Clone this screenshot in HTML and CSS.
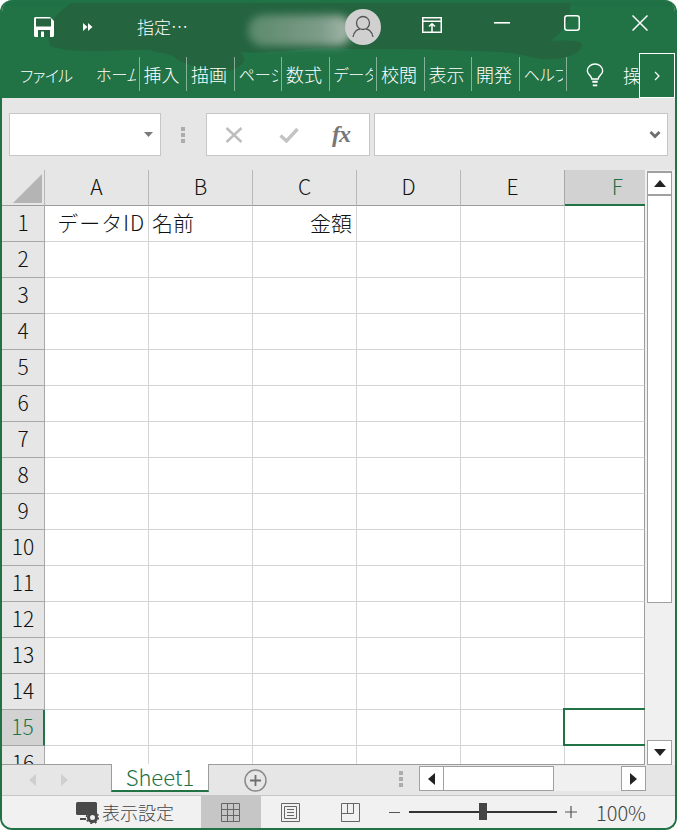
FILE: index.html
```html
<!DOCTYPE html>
<html lang="ja">
<head>
<meta charset="utf-8">
<title>Excel</title>
<link rel="stylesheet" href="styles.css">
</head>
<body>
<div class="window">
  <header class="head">
    <svg class="texture" width="677" height="98" viewBox="0 0 677 98"><path d="M0 2H677V6H0Z" fill="#1f7045"/><path d="M50 46C46 30 52 14 72 3L570 3C572 20 562 34 550 41C566 40 584 40 582 46C578 58 552 62 530 57C510 50 480 52 450 50C400 48 360 50 320 48C290 50 262 54 240 52C250 62 240 66 232 70C210 72 190 66 178 60C170 52 160 54 150 50C120 48 80 56 50 46Z" fill="#24643f"/></svg>
    <div class="titlebar">
      <svg class="ic-save" width="20" height="20" viewBox="0 0 20 20"><path d="M0 1.500A1.500 1.500 0 0 1 1.500 0H16L20 4V18.500A1.500 1.500 0 0 1 18.500 20H1.500A1.500 1.500 0 0 1 0 18.500Z" fill="#fff"/><rect x="2" y="1.500" width="15" height="8" fill="#24643f"/><rect x="4" y="13" width="12" height="7" fill="#24643f"/><rect x="7" y="14.500" width="3" height="5.500" fill="#fff"/></svg>
      <svg class="ic-more" width="10" height="8" viewBox="0 0 10 8"><path d="M0 0L4.500 4L0 8ZM5 0L9.500 4L5 8Z" fill="#fff"/></svg>
      <span class="doc">指定…</span>
      <div class="blur"></div>
      <svg class="avatar" width="36" height="36" viewBox="0 0 36 36"><circle cx="18" cy="18" r="18" fill="#d0d0d0"/><circle cx="18" cy="14" r="6.500" fill="none" stroke="#555" stroke-width="1.300"/><path d="M8 28C9 22 13 20 15 20M28 28C27 22 23 20 21 20" fill="none" stroke="#555" stroke-width="1.300"/></svg>
      <svg class="ic-display" width="20" height="16" viewBox="0 0 20 16"><path d="M.75.75H19.250V15.250H.75ZM1 4.250H19" fill="none" stroke="#fff" stroke-width="1.500"/><path d="M10 15V7M7 9.500L10 6.800L13 9.500" fill="none" stroke="#fff" stroke-width="1.500"/></svg>
      <svg class="ic-min" width="16" height="2" viewBox="0 0 16 2"><rect width="16" height="1.600" fill="#fff"/></svg>
      <svg class="ic-max" width="16" height="16" viewBox="0 0 16 16"><rect x=".75" y=".75" width="14.500" height="14.500" rx="2.500" fill="none" stroke="#fff" stroke-width="1.500"/></svg>
      <svg class="ic-close" width="16" height="16" viewBox="0 0 16 16"><path d="M.5.500L15.500 15.500M15.500.500L.5 15.500" stroke="#fff" stroke-width="1.500"/></svg>
    </div>
    <nav class="ribbon">
      <div class="tab-file">ファイル</div>
      <div class="tab kana"><span>ホーム</span></div>
      <div class="tab"><span>挿入</span></div>
      <div class="tab"><span>描画</span></div>
      <div class="tab kana"><span>ページ</span></div>
      <div class="tab"><span>数式</span></div>
      <div class="tab kana"><span>データ</span></div>
      <div class="tab"><span>校閲</span></div>
      <div class="tab"><span>表示</span></div>
      <div class="tab"><span>開発</span></div>
      <div class="tab kana"><span>ヘルプ</span></div>
      <svg class="ic-bulb" width="18" height="24" viewBox="0 0 20 26"><path d="M6.500 17.500C6 13.500 1.500 12.500 1.500 8.500A8.500 7.800 0 0 1 18.500 8.500C18.500 12.500 14 13.500 13.500 17.500Z" fill="none" stroke="#fff" stroke-width="1.600"/><path d="M7 20.500H13M7.500 24.500H12.500" stroke="#fff" stroke-width="2"/></svg>
      <div class="search">操作</div>
      <div class="more"><svg width="6" height="10" viewBox="0 0 6 10"><path d="M1 1L5 5L1 9" fill="none" stroke="#fff" stroke-width="1.200"/></svg></div>
    </nav>
  </header>

  <section class="formula">
    <div class="namebox"><svg width="9" height="5" viewBox="0 0 9 5"><path d="M0 0H9L4.500 5Z" fill="#7a7a7a"/></svg></div>
    <div class="dots"><i></i><i></i><i></i></div>
    <div class="fbtns">
      <svg width="18" height="16" viewBox="0 0 18 16"><path d="M1.500 1L16.500 15M16.500 1L1.500 15" stroke="#bdbdbd" stroke-width="2.400"/></svg>
      <svg width="20" height="16" viewBox="0 0 20 16"><path d="M1.500 8.500L7.500 14L18.500 2" fill="none" stroke="#c4c4c4" stroke-width="3.400"/></svg>
      <span class="fx">fx</span>
    </div>
    <div class="finput"><svg width="12" height="8" viewBox="0 0 12 8"><path d="M1.500 1L6 5.500L10.500 1" fill="none" stroke="#6e6e6e" stroke-width="2.800"/></svg></div>
  </section>

  <section class="sheet">
    <div class="gridwrap">
      <table class="grid">
        <colgroup><col class="c0"><col class="c1"><col class="c1"><col class="c1"><col class="c1"><col class="c1"><col class="c2"></colgroup>
        <tr class="cols"><th class="corner"><svg width="29" height="29" viewBox="0 0 29 29"><path d="M29 0V29H0Z" fill="#b4b4b4"/></svg></th><th>A</th><th>B</th><th>C</th><th>D</th><th>E</th><th class="sel-col">F</th></tr>
        <tr><th>1</th><td class="num wide">データID</td><td>名前</td><td class="num amount">金額</td><td></td><td></td><td></td></tr>
        <tr><th>2</th><td></td><td></td><td></td><td></td><td></td><td></td></tr>
        <tr><th>3</th><td></td><td></td><td></td><td></td><td></td><td></td></tr>
        <tr><th>4</th><td></td><td></td><td></td><td></td><td></td><td></td></tr>
        <tr><th>5</th><td></td><td></td><td></td><td></td><td></td><td></td></tr>
        <tr><th>6</th><td></td><td></td><td></td><td></td><td></td><td></td></tr>
        <tr><th>7</th><td></td><td></td><td></td><td></td><td></td><td></td></tr>
        <tr><th>8</th><td></td><td></td><td></td><td></td><td></td><td></td></tr>
        <tr><th>9</th><td></td><td></td><td></td><td></td><td></td><td></td></tr>
        <tr><th>10</th><td></td><td></td><td></td><td></td><td></td><td></td></tr>
        <tr><th>11</th><td></td><td></td><td></td><td></td><td></td><td></td></tr>
        <tr><th>12</th><td></td><td></td><td></td><td></td><td></td><td></td></tr>
        <tr><th>13</th><td></td><td></td><td></td><td></td><td></td><td></td></tr>
        <tr><th>14</th><td></td><td></td><td></td><td></td><td></td><td></td></tr>
        <tr><th class="sel-row">15</th><td></td><td></td><td></td><td></td><td></td><td class="active"></td></tr>
        <tr><th>16</th><td></td><td></td><td></td><td></td><td></td><td></td></tr>
      </table>
    </div>
    <div class="vscroll">
      <div class="sbtn"><svg width="12" height="7" viewBox="0 0 12 7"><path d="M6 0L12 7H0Z" fill="#222"/></svg></div>
      <div class="vthumb"></div>
      <div class="vtrack"></div>
      <div class="sbtn"><svg width="12" height="7" viewBox="0 0 12 7"><path d="M0 0H12L6 7Z" fill="#222"/></svg></div>
    </div>
  </section>

  <section class="sheetbar">
    <div class="nav">
      <svg width="7" height="12" viewBox="0 0 7 12"><path d="M7 0V12L0 6Z" fill="#cfcfcf"/></svg>
      <svg width="7" height="12" viewBox="0 0 7 12"><path d="M0 0V12L7 6Z" fill="#cfcfcf"/></svg>
    </div>
    <div class="sheettab">Sheet1</div>
    <svg class="addsheet" width="23" height="23" viewBox="0 0 23 23"><circle cx="11.500" cy="11.500" r="10.500" fill="none" stroke="#8a8a8a" stroke-width="1.500"/><path d="M11.500 6V17M6 11.500H17" stroke="#6e6e6e" stroke-width="1.800"/></svg>
    <div class="dots bar-dots"><i></i><i></i><i></i></div>
    <div class="hscroll">
      <div class="hbtn"><svg width="7" height="12" viewBox="0 0 7 12"><path d="M7 0V12L0 6Z" fill="#222"/></svg></div>
      <div class="hthumb"></div>
      <div class="htrack"></div>
      <div class="hbtn"><svg width="7" height="12" viewBox="0 0 7 12"><path d="M0 0V12L7 6Z" fill="#222"/></svg></div>
    </div>
  </section>

  <footer class="status">
    <svg class="ic-settings" width="23" height="23" viewBox="0 0 23 23"><rect x="0" y="1" width="21" height="13" rx="1.500" fill="#4a4a4a"/><path d="M4 18H10" stroke="#4a4a4a" stroke-width="2"/><circle cx="16.500" cy="16.500" r="4" fill="none" stroke="#4a4a4a" stroke-width="3"/><circle cx="16.500" cy="16.500" r="6" fill="none" stroke="#4a4a4a" stroke-width="1.500" stroke-dasharray="2 2.700"/></svg>
    <span class="settings-label">表示設定</span>
    <div class="view active-view"><svg width="19" height="19" viewBox="0 0 19 19"><path d="M.5.500H18.500V18.500H.5ZM6.500 0V19M12.500 0V19M0 6.500H19M0 12.500H19" fill="none" stroke="#666"/></svg></div>
    <div class="view"><svg width="19" height="19" viewBox="0 0 19 19"><path d="M.5.500H18.500V18.500H.5ZM3.500 3.500H15.500V15.500H3.500ZM6 6.500H13M6 9.500H13M6 12.500H13" fill="none" stroke="#666"/></svg></div>
    <div class="view"><svg width="19" height="19" viewBox="0 0 19 19"><path d="M.5.500H18.500V18.500H.5ZM.5 10.500H12.500V.5M6.500.500V10.500" fill="none" stroke="#666"/></svg></div>
    <div class="zoom">
      <span class="zminus"></span>
      <div class="slider"><span class="knob"></span></div>
      <svg width="12" height="12" viewBox="0 0 12 12"><path d="M6 0V12M0 6H12" stroke="#555" stroke-width="1.200"/></svg>
      <span class="pct">100%</span>
    </div>
  </footer>
</div>
</body>
</html>
```

FILE: styles.css
```css
* { box-sizing: border-box; }
html, body { margin: 0; padding: 0; background: #fff; }
body { font-family: "Noto Sans CJK JP", "Noto Sans", sans-serif; }
.window {
  width: 677px; height: 830px; display: flex; flex-direction: column;
  border: 2px solid #217346; border-top: 0; border-radius: 12px; overflow: hidden;
  background: #e6e6e6; font-feature-settings: "palt";
}
svg { display: block; flex: none; }

/* header */
.head { position: relative; height: 98px; margin: 0 -2px; background: #217346; color: #fff; flex: none; }
.texture { position: absolute; left: 0; top: 0; filter: blur(.7px); }
.titlebar { position: relative; height: 50px; display: flex; align-items: center; }
.ic-save { margin: 3px 0 0 34px; }
.ic-more { margin: 4px 0 0 29px; }
.doc { font-size: 17px; font-weight: 300; margin: 3px 0 0 44px; width: 108px; white-space: nowrap; flex: none; }
.blur {
  position: absolute; left: 248px; top: 15px; width: 104px; height: 31px; border-radius: 16px;
  background: linear-gradient(90deg, #5b8a6c, #7d9c88 70%, #a9b8ad); filter: blur(4px);
}
.titlebar .avatar { position: relative; margin: 3px 0 0 100px; }
.ic-display { margin: 0 0 0 41px; }
.ic-min { margin: -4px 0 0 52px; }
.ic-max { margin: -4px 0 0 54px; }
.ic-close { margin: -4px 0 0 52px; }

.ribbon { position: relative; height: 48px; display: flex; align-items: flex-start; font-size: 18px; font-weight: 300; color: #fff; }
.tab-file { width: 92px; flex: none; padding: 12px 0 0 20px; line-height: 26px; white-space: nowrap; font-size: 16px; letter-spacing: -.8px; }
.tab {
  width: 47.500px; height: 34px; margin-top: 7px; padding: 0 3px 0 4px; flex: none;
  border-right: 1px solid rgba(255,255,255,.45); line-height: 34px;
}
.tab span { display: block; overflow: hidden; white-space: nowrap; }
.tab.kana { font-size: 16px; }
.ic-bulb { margin: 13px 0 0 19px; }
.search { width: 18px; margin: 12px 0 0 19px; line-height: 26px; overflow: hidden; white-space: nowrap; flex: none; }
.more {
  position: absolute; left: 639px; top: 3px; width: 36px; height: 45px; background: #217346;
  border: 1px solid #fff; display: flex; align-items: center; justify-content: center;
}

/* formula bar */
.formula { height: 72px; flex: none; display: flex; padding: 15px 0 0 7px; }
.namebox, .fbtns, .finput { height: 43px; background: #fff; border: 1px solid #c6c6c6; display: flex; align-items: center; }
.namebox { width: 152px; justify-content: flex-end; padding-right: 7px; }
.dots { display: flex; flex-direction: column; gap: 2px; width: 45px; height: 43px; padding-left: 20px; justify-content: center; }
.dots i { display: block; width: 4px; height: 4px; background: #acacac; }
.fbtns { width: 164px; padding-left: 18px; }
.fbtns svg:nth-child(2) { margin-left: 36px; }
.fx { margin-left: 33px; font: italic bold 24px "Liberation Serif", serif; color: #777; letter-spacing: -1px; }
.finput { width: 294px; margin-left: 4px; justify-content: flex-end; padding-right: 6px; }

/* sheet */
.sheet { height: 595px; flex: none; display: flex; background: #f0f0f0; position: relative; z-index: 0; }
.gridwrap { width: 643px; height: 595px; overflow: hidden; border-bottom: 1px solid #9c9c9c; background: #fff; flex: none; }
.grid { border-collapse: separate; border-spacing: 0; table-layout: fixed; width: 643px; font-size: 21px; font-weight: 300; color: #111; font-feature-settings: normal; }
.c0 { width: 43px; } .c1 { width: 104px; } .c2 { width: 80px; }
.grid tr { height: 36px; }
.grid th, .grid td { height: 36px; padding: 0; line-height: 32px; font-weight: 300; vertical-align: top; }
.grid th { background: #e6e6e6; border-right: 1px solid #a8a8a8; border-bottom: 1px solid #a8a8a8; text-align: center; }
.grid .cols th { border-right-color: #b8b8b8; border-bottom-color: #9c9c9c; }
.grid td { background: #fff; border-right: 1px solid #d4d4d4; border-bottom: 1px solid #d4d4d4; padding: 0 3px; white-space: nowrap; }
.grid td:last-child { border-right: 1px solid #9c9c9c; }
.grid td.num { text-align: right; }
.grid td.wide { letter-spacing: 1px; }
.grid td.amount { padding-right: 4px; }
.corner svg { margin: 4px 0 0 11px; }
.grid .cols .sel-col { background: #d2d2d2; border-right: 0; border-bottom: 2px solid #217346; color: #217346; text-align: right; padding-right: 22px; box-shadow: -1px 0 0 #a8a8a8; }
.grid .sel-row { background: #d2d2d2; border-right: 2px solid #217346; color: #217346; }
.grid td.active { position: relative; }
.grid td.active::after {
  content: ""; position: absolute; left: -2px; top: -2px; right: -1px; bottom: -1px;
  border: 2px solid #217346; border-right: 0;
}

.vscroll { width: 30px; height: 595px; flex: none; padding: 1px 3px 0 2px; display: flex; flex-direction: column; }
.sbtn { height: 25px; flex: none; background: #fff; border: 1px solid #a0a0a0; display: flex; align-items: center; justify-content: center; }
.sbtn:first-child { border-width: 2px 1px; }
.vthumb { height: 407px; flex: none; background: #fff; border: 1px solid #a0a0a0; border-top: 0; }
.vtrack { flex: 1; }

/* sheet tabs */
.sheetbar { height: 31px; flex: none; display: flex; align-items: center; background: #e6e6e6; border-bottom: 1px solid #c6c6c6; }
.nav { width: 109px; display: flex; gap: 25px; padding-left: 27px; }
.sheettab {
  position: relative; z-index: 1; width: 98px; height: 28px; margin-top: -1px; align-self: flex-start;
  background: #fff; border: 1px solid #9c9c9c; border-top: 0; border-bottom: 2px solid #217346;
  color: #217346; text-align: center; font-size: 22px; font-weight: 300; line-height: 25px;
}
.addsheet { margin-left: 35px; }
.bar-dots { width: 152px; height: 30px; padding-left: 132px; margin-top: -2px; }
.hscroll { width: 227px; height: 25px; display: flex; background: #f0f0f0; margin-top: -3px; flex: none; }
.hbtn { width: 25px; flex: none; background: #fff; border: 1px solid #a0a0a0; display: flex; align-items: center; justify-content: center; }
.hthumb { width: 110px; flex: none; background: #fff; border: 1px solid #a0a0a0; border-left: 0; }
.htrack { flex: 1; }

/* status bar */
.status { height: 32px; flex: none; background: #f1f1f1; display: flex; align-items: center; color: #444; }
.ic-settings { margin-left: 74px; }
.settings-label { width: 102px; padding-left: 3px; font-size: 18px; font-weight: 300; white-space: nowrap; font-feature-settings: normal; line-height: 32px; flex: none; }
.view { width: 60px; height: 32px; padding-right: 2px; display: flex; align-items: center; justify-content: center; flex: none; }
.active-view { background: #c6c6c6; }
.zoom { display: flex; align-items: center; margin-left: 8px; }
.zminus { width: 11px; height: 1px; background: #555; }
.slider { position: relative; width: 148px; height: 2px; background: #333; margin: 0 8px 0 9px; }
.knob { position: absolute; left: 70px; top: -8px; width: 8px; height: 17px; background: #444; }
.pct { margin-left: 19px; font-size: 20px; font-weight: 300; color: #444; white-space: nowrap; }
```
